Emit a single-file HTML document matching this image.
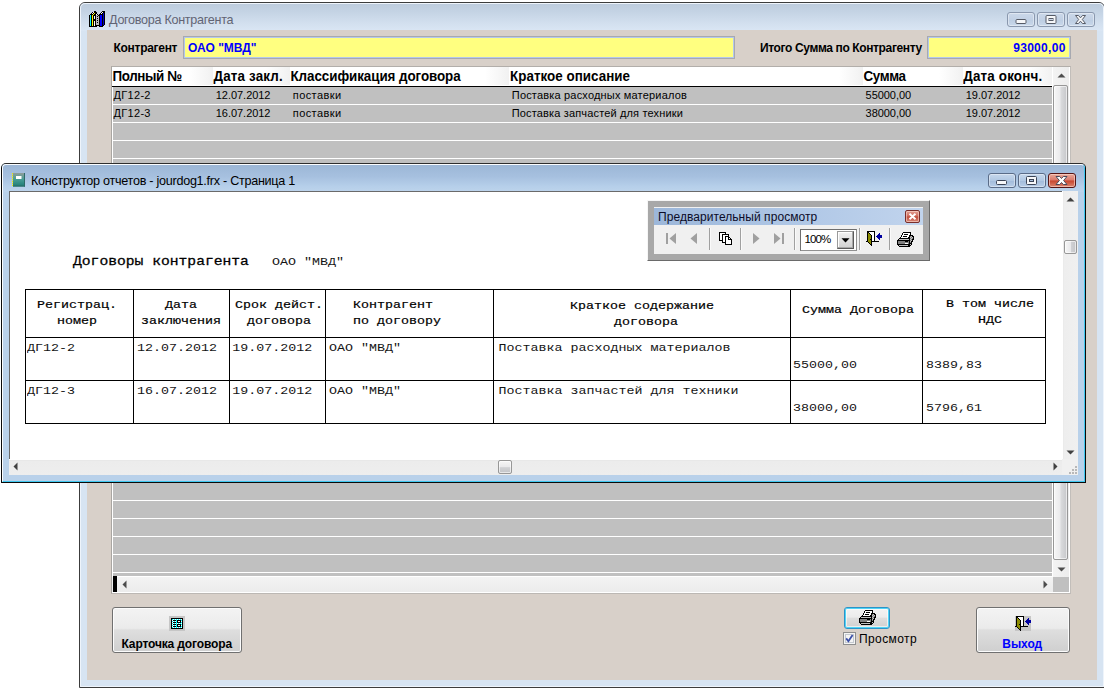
<!DOCTYPE html>
<html lang="ru">
<head>
<meta charset="utf-8">
<title>Договора Контрагента</title>
<style>
*{box-sizing:border-box;margin:0;padding:0}
html,body{width:1104px;height:689px;overflow:hidden;background:#fff}
body{position:relative;font-family:"Liberation Sans",sans-serif;font-size:11px;color:#000}
.a{position:absolute}
.t{position:absolute;white-space:nowrap;line-height:1}
.b{font-weight:bold}
.m{font-family:"Liberation Mono",monospace}

/* ---------- back window ---------- */
#w1{left:79px;top:2px;width:1026px;height:686px;border:1px solid #3c3c3c;border-radius:6px 6px 0 0;
  background:#d7e4f2;overflow:hidden}
#w1 .cap{left:0;top:0;width:100%;height:28px;background:linear-gradient(#bccbdc,#c4d3e4 30%,#d3e0ef 75%,#dae6f4)}
#w1 .hl{left:0;top:0;right:0;bottom:0;border:1px solid #eef4fb;border-radius:5px 5px 0 0}
#c1{left:87px;top:30px;width:1010px;height:650px;background:#d8d0c9}
.cb{position:absolute;top:12px;height:15px;border:1px solid #8a98ae;border-radius:3px;
  background:linear-gradient(#cbd8e9,#c2d1e5 50%,#bccde2 52%,#c9d8ea);box-shadow:inset 0 0 0 1px rgba(255,255,255,.4)}
.yb{position:absolute;background:#ffff80;border:1px solid #a7a9b0;box-shadow:inset 0 0 0 1px #b4c8ec}
.blue{color:#0000ff}

/* grid */
#g{left:111px;top:66px;width:960px;height:528px;background:#c0c0c0;border:1px solid;border-color:#b2aeaa #c2beba #bcb8b4 #a9a6a2;box-shadow:inset -1px -1px 0 #fff}
#gh{left:112px;top:67px;width:941px;height:19px;background:#fff}
.gs{position:absolute;top:67px;height:18px;width:24px;background:linear-gradient(90deg,rgba(242,242,242,0),#f1f1f1)}
.gr{position:absolute;left:113px;width:939px;height:1px;background:#fff}
.h{position:absolute;top:69px;font-weight:bold;font-size:13.4px;white-space:nowrap;line-height:15px;margin-left:-.5px;transform:scaleY(1.07);transform-origin:0 12px}
.d{position:absolute;font-size:11px;white-space:nowrap;line-height:13px}
.btn{position:absolute;border:1px solid #707070;border-radius:3px;
  background:linear-gradient(#f3f3f3,#ebebeb 46%,#dedede 50%,#cfcfcf);box-shadow:inset 0 0 0 1px #fcfcfc}

/* ---------- front window ---------- */
#w2{left:1px;top:163px;width:1085px;height:320px;border:1px solid #0a0a0a;border-top-color:#2e2e2e;border-radius:5px 5px 0 0;
  background:#b9d1ea;overflow:hidden}
#w2 .cap{left:0;top:0;width:100%;height:28px;background:linear-gradient(#9bb6d6,#a6c0df 45%,#b6cfea 80%,#bdd4ec)}
#w2 .hl{left:0;top:0;right:0;bottom:0;border:1px solid;border-color:#fbfdff #40c8f0 #40c8f0 #fbfdff;border-radius:4px 4px 0 0}
#c2{left:9px;top:191px;width:1069px;height:284px;background:#fff;border-top:1px solid #6a6a6a;border-left:1px solid #6a6a6a}
.vl{position:absolute;width:1px;background:#000}
.hln{position:absolute;height:1px;background:#000}
.rh,.rd,.rt{position:absolute;font-family:"Liberation Mono",monospace;font-size:13.33px;line-height:16px;height:16px;white-space:nowrap;transform:scaleY(.88);transform-origin:0 12px}
.rh{-webkit-text-stroke:.22px #000}
.rd{color:#141414}
.rt{font-size:14.67px;-webkit-text-stroke:.3px #000;transform:scaleY(.85);transform-origin:0 12px}
.sep{position:absolute;top:228px;width:2px;height:22px;border-left:1px solid #a0a0a0;border-right:1px solid #fafafa}
</style>
</head>
<body>

<!-- ================= BACK WINDOW ================= -->
<div id="w1" class="a"><div class="a cap"></div><div class="a hl"></div></div>
<div id="c1" class="a"></div>

<svg class="a" style="left:89px;top:11px" width="16" height="16" viewBox="0 0 16 16" shape-rendering="crispEdges"><path fill="#000000" d="M5 0h2v1h-2zM13 0h3v1h-3zM3 1h1v1h-1zM5 1h3v1h-3zM12 1h1v1h-1zM14 1h2v1h-2zM2 2h1v1h-1zM4 2h1v1h-1zM6 2h2v1h-2zM11 2h1v1h-1zM13 2h1v1h-1zM15 2h1v1h-1zM1 3h3v1h-3zM5 3h2v1h-2zM8 3h1v1h-1zM10 3h4v1h-4zM15 3h1v1h-1zM0 4h1v1h-1zM2 4h1v1h-1zM4 4h3v1h-3zM9 4h2v1h-2zM13 4h1v1h-1zM15 4h1v1h-1zM0 5h1v1h-1zM2 5h1v1h-1zM4 5h1v1h-1zM6 5h1v1h-1zM8 5h1v1h-1zM10 5h1v1h-1zM13 5h1v1h-1zM15 5h1v1h-1zM0 6h1v1h-1zM2 6h1v1h-1zM4 6h1v1h-1zM6 6h1v1h-1zM10 6h1v1h-1zM13 6h1v1h-1zM15 6h1v1h-1zM0 7h1v1h-1zM2 7h1v1h-1zM4 7h1v1h-1zM6 7h1v1h-1zM8 7h1v1h-1zM10 7h1v1h-1zM13 7h1v1h-1zM15 7h1v1h-1zM0 8h1v1h-1zM2 8h1v1h-1zM4 8h3v1h-3zM10 8h1v1h-1zM13 8h1v1h-1zM15 8h1v1h-1zM0 9h1v1h-1zM2 9h1v1h-1zM4 9h3v1h-3zM8 9h1v1h-1zM10 9h1v1h-1zM13 9h1v1h-1zM15 9h1v1h-1zM0 10h1v1h-1zM2 10h1v1h-1zM4 10h1v1h-1zM6 10h1v1h-1zM10 10h1v1h-1zM13 10h1v1h-1zM15 10h1v1h-1zM0 11h1v1h-1zM2 11h1v1h-1zM4 11h1v1h-1zM6 11h1v1h-1zM8 11h1v1h-1zM10 11h1v1h-1zM13 11h1v1h-1zM15 11h1v1h-1zM0 12h1v1h-1zM2 12h1v1h-1zM4 12h1v1h-1zM6 12h1v1h-1zM10 12h1v1h-1zM13 12h1v1h-1zM15 12h1v1h-1zM0 13h1v1h-1zM2 13h1v1h-1zM4 13h1v1h-1zM6 13h1v1h-1zM10 13h1v1h-1zM13 13h1v1h-1zM15 13h1v1h-1zM0 14h1v1h-1zM2 14h1v1h-1zM4 14h1v1h-1zM6 14h5v1h-5zM13 14h2v1h-2zM0 15h8v1h-8zM10 15h4v1h-4z"/><path fill="#ffffff" d="M4 1h1v1h-1zM13 1h1v1h-1zM3 2h1v1h-1zM12 2h1v1h-1zM7 3h1v1h-1zM5 5h1v1h-1zM5 6h1v1h-1zM5 7h1v1h-1zM5 10h1v1h-1zM5 11h1v1h-1zM5 12h1v1h-1zM5 13h1v1h-1zM5 14h1v1h-1z"/><path fill="#ffff00" d="M5 2h1v1h-1zM4 3h1v1h-1zM3 4h1v1h-1zM3 5h1v1h-1zM3 6h1v1h-1zM3 7h1v1h-1zM3 8h1v1h-1zM3 9h1v1h-1zM3 10h1v1h-1zM3 11h1v1h-1zM3 12h1v1h-1zM3 13h1v1h-1zM3 14h1v1h-1z"/><path fill="#0000c0" d="M14 2h1v1h-1zM14 3h1v1h-1zM14 4h1v1h-1zM14 5h1v1h-1zM14 6h1v1h-1zM14 7h1v1h-1zM14 8h1v1h-1zM14 9h1v1h-1zM14 10h1v1h-1zM14 11h1v1h-1zM14 12h1v1h-1zM14 13h1v1h-1z"/><path fill="#00ffff" d="M1 4h1v1h-1zM1 5h1v1h-1zM1 6h1v1h-1zM1 7h1v1h-1zM1 8h1v1h-1zM1 9h1v1h-1zM1 10h1v1h-1zM1 11h1v1h-1zM1 12h1v1h-1zM1 13h1v1h-1zM1 14h1v1h-1z"/><path fill="#c0c0c0" d="M7 4h2v1h-2zM7 5h1v1h-1zM9 5h1v1h-1zM7 6h3v1h-3zM7 7h1v1h-1zM9 7h1v1h-1zM7 8h3v1h-3zM7 9h1v1h-1zM9 9h1v1h-1zM7 10h3v1h-3zM7 11h1v1h-1zM9 11h1v1h-1zM7 12h3v1h-3zM7 13h3v1h-3z"/><path fill="#0000ff" d="M11 4h2v1h-2zM11 5h2v1h-2zM11 6h2v1h-2zM11 7h2v1h-2zM11 8h2v1h-2zM11 9h2v1h-2zM11 10h2v1h-2zM11 11h2v1h-2zM11 12h2v1h-2zM11 13h2v1h-2zM11 14h2v1h-2z"/></svg>
<div class="t" style="letter-spacing:-0.292px;left:109px;top:13.5px;font-size:12.6px;color:#626474">Договора Контрагента</div>

<!-- caption buttons (inactive) -->
<div class="cb" style="left:1007px;width:28px"></div>
<div class="cb" style="left:1037px;width:28px"></div>
<div class="cb" style="left:1067px;width:28px"></div>
<svg class="a" style="left:1007px;top:12px" width="88" height="15" viewBox="0 0 88 15">
  <rect x="9" y="7.500" width="10" height="4" fill="#f6f7f9" stroke="#565b66" stroke-width="1" rx="1"/>
  <rect x="39" y="3.500" width="10" height="8" fill="#f6f7f9" stroke="#565b66" stroke-width="1" rx="1"/>
  <rect x="42" y="6.5" width="4" height="2" fill="#c8d5e6" stroke="#565b66" stroke-width="1"/>
  <path d="M68.500 3.5 L71.5 3.500 L73.5 5.8 L75.5 3.5 L78.5 3.5 L75.3 7.5 L78.500 11.5 L75.5 11.5 L73.500 9.2 L71.5 11.500 L68.5 11.5 L71.7 7.500 Z" fill="#f6f7f9" stroke="#565b66" stroke-width="1" stroke-linejoin="round"/>
</svg>

<!-- top row -->
<div class="t b" style="letter-spacing:-0.288px;left:113.500px;top:42px;font-size:12px">Контрагент</div>
<div class="yb" style="left:183px;top:36px;width:552px;height:23px"></div>
<div class="t b blue" style="letter-spacing:-0.020px;left:188px;top:42px;font-size:12px">ОАО "МВД"</div>
<div class="t b" style="letter-spacing:-0.370px;left:760px;top:42px;font-size:12px">Итого Сумма по Контрагенту</div>
<div class="yb" style="left:927px;top:36px;width:144px;height:23px"></div>
<div class="t b blue" style="letter-spacing:0.305px;left:1013.2px;top:42px;font-size:12px">93000,00</div>

<!-- grid -->
<div id="g" class="a"></div>
<div id="gh" class="a"></div>
<div class="gs" style="left:189px"></div>
<div class="gs" style="left:266px"></div>
<div class="gs" style="left:485px"></div>
<div class="gs" style="left:839px"></div>
<div class="gs" style="left:939px"></div>
<div class="gs" style="left:1029px"></div>
<div class="a" style="left:112px;top:86px;width:941px;height:1px;background:#000"></div>
<div class="h" style="letter-spacing:-0.384px;left:113px">Полный №</div>
<div class="h" style="letter-spacing:0.163px;left:214px">Дата закл.</div>
<div class="h" style="letter-spacing:-0.061px;left:291px">Классификация договора</div>
<div class="h" style="letter-spacing:0.029px;left:510.5px">Краткое описание</div>
<div class="h" style="letter-spacing:-0.383px;left:864px">Сумма</div>
<div class="h" style="letter-spacing:0.181px;left:963.7px">Дата оконч.</div>

<div class="d" style="letter-spacing:0.312px;left:113.500px;top:89px">ДГ12-2</div>
<div class="d" style="letter-spacing:-0.040px;left:215.800px;top:89px">12.07.2012</div>
<div class="d" style="letter-spacing:0.411px;left:292.8px;top:89px">поставки</div>
<div class="d" style="letter-spacing:0.181px;left:511.8px;top:89px">Поставка расходных материалов</div>
<div class="d" style="letter-spacing:-0.056px;left:865.6px;top:89px">55000,00</div>
<div class="d" style="letter-spacing:-0.040px;left:965.800px;top:89px">19.07.2012</div>

<div class="d" style="letter-spacing:0.312px;left:113.5px;top:107px">ДГ12-3</div>
<div class="d" style="letter-spacing:-0.040px;left:215.8px;top:107px">16.07.2012</div>
<div class="d" style="letter-spacing:0.411px;left:292.800px;top:107px">поставки</div>
<div class="d" style="letter-spacing:0.150px;left:511.800px;top:107px">Поставка запчастей для техники</div>
<div class="d" style="letter-spacing:-0.056px;left:865.600px;top:107px">38000,00</div>
<div class="d" style="letter-spacing:-0.040px;left:965.8px;top:107px">19.07.2012</div>

<div class="gr" style="top:104px"></div>
<div class="gr" style="top:122px"></div>
<div class="gr" style="top:140px"></div>
<div class="gr" style="top:158px"></div>
<div class="gr" style="top:482px"></div>
<div class="gr" style="top:500px"></div>
<div class="gr" style="top:518px"></div>
<div class="gr" style="top:536px"></div>
<div class="gr" style="top:554px"></div>
<div class="gr" style="top:572px"></div>
<div class="a" style="left:112px;top:87px;width:1px;height:506px;background:#fff"></div>
<div class="a" style="left:112px;top:592px;width:958px;height:1px;background:#fff"></div>

<!-- grid v-scrollbar -->
<div class="a" style="left:1052px;top:67px;width:17px;height:510px;background:linear-gradient(90deg,#fff 1px,#f3f3f3 1px,#ededed)"></div>
<div class="a" style="left:1053px;top:85px;width:15px;height:475px;border:1px solid #979797;border-radius:2px;background:linear-gradient(90deg,#f6f6f6,#ebebed 45%,#d9dadc 55%,#c6c7ca);box-shadow:inset 0 0 0 1px rgba(255,255,255,.6)"></div>
<svg class="a" style="left:1057px;top:73.3px" width="9" height="5" viewBox="0 0 9 5"><path d="M0.5 4.500 L4.5 0.500 L8.5 4.5 Z" fill="#4d4d4d"/></svg>
<svg class="a" style="left:1057px;top:566.7px" width="9" height="5" viewBox="0 0 9 5"><path d="M0.500 0.5 L4.500 4.5 L8.500 0.5 Z" fill="#4d4d4d"/></svg>
<!-- grid h-scrollbar -->
<div class="a" style="left:112px;top:576px;width:941px;height:16px;background:linear-gradient(#fff 1px,#f3f3f3 1px,#ececec)"></div>
<div class="a" style="left:113px;top:576px;width:4px;height:16px;background:#000"></div>
<div class="a" style="left:1053px;top:577px;width:16px;height:15px;background:#c0c0c0"></div>
<svg class="a" style="left:122px;top:580px" width="5" height="9" viewBox="0 0 5 9"><path d="M4.5 0.5 L0.5 4.5 L4.5 8.500 Z" fill="#4d4d4d"/></svg>
<svg class="a" style="left:1042.7px;top:580px" width="5" height="9" viewBox="0 0 5 9"><path d="M0.5 0.500 L4.500 4.500 L0.5 8.5 Z" fill="#4d4d4d"/></svg>

<!-- bottom buttons -->
<div class="btn" style="left:112px;top:607px;width:130px;height:46px"></div>
<div class="a" style="left:169px;top:616px;width:16px;height:15px;background:#c6c6c6"></div>
<svg class="a" style="left:171px;top:618px" width="12" height="11" viewBox="0 0 12 11" shape-rendering="crispEdges"><path fill="#000000" d="M0 0h12v1h-12zM0 1h1v1h-1zM11 1h1v1h-1zM0 2h1v1h-1zM2 2h3v1h-3zM6 2h4v1h-4zM11 2h1v1h-1zM0 3h1v1h-1zM6 3h1v1h-1zM9 3h1v1h-1zM11 3h1v1h-1zM0 4h1v1h-1zM2 4h3v1h-3zM6 4h4v1h-4zM11 4h1v1h-1zM0 5h1v1h-1zM11 5h1v1h-1zM0 6h1v1h-1zM2 6h3v1h-3zM6 6h4v1h-4zM11 6h1v1h-1zM0 7h1v1h-1zM6 7h1v1h-1zM9 7h1v1h-1zM11 7h1v1h-1zM0 8h1v1h-1zM2 8h3v1h-3zM6 8h4v1h-4zM11 8h1v1h-1zM0 9h1v1h-1zM11 9h1v1h-1zM0 10h12v1h-12z"/><path fill="#00ffff" d="M1 1h1v1h-1zM3 1h1v1h-1zM5 1h1v1h-1zM7 1h1v1h-1zM9 1h1v1h-1zM5 2h1v1h-1zM10 2h1v1h-1zM1 3h1v1h-1zM3 3h1v1h-1zM5 3h1v1h-1zM5 4h1v1h-1zM10 4h1v1h-1zM1 5h1v1h-1zM3 5h1v1h-1zM5 5h1v1h-1zM7 5h1v1h-1zM9 5h1v1h-1zM5 6h1v1h-1zM10 6h1v1h-1zM1 7h1v1h-1zM3 7h1v1h-1zM5 7h1v1h-1zM5 8h1v1h-1zM10 8h1v1h-1zM1 9h1v1h-1zM3 9h1v1h-1zM5 9h1v1h-1zM7 9h1v1h-1zM9 9h1v1h-1z"/><path fill="#ffffff" d="M2 1h1v1h-1zM4 1h1v1h-1zM6 1h1v1h-1zM8 1h1v1h-1zM10 1h1v1h-1zM1 2h1v1h-1zM2 3h1v1h-1zM4 3h1v1h-1zM7 3h2v1h-2zM10 3h1v1h-1zM1 4h1v1h-1zM2 5h1v1h-1zM4 5h1v1h-1zM6 5h1v1h-1zM8 5h1v1h-1zM10 5h1v1h-1zM1 6h1v1h-1zM2 7h1v1h-1zM4 7h1v1h-1zM7 7h2v1h-2zM10 7h1v1h-1zM1 8h1v1h-1zM2 9h1v1h-1zM4 9h1v1h-1zM6 9h1v1h-1zM8 9h1v1h-1zM10 9h1v1h-1z"/></svg>
<div class="t b" style="letter-spacing:-0.132px;left:121.5px;top:638px;font-size:12px">Карточка договора</div>

<div class="btn" style="left:844px;top:607px;width:46px;height:22px;border-color:#2c93c8;box-shadow:inset 0 0 0 1px #4fd4f6,inset 0 0 0 2px rgba(255,255,255,.6);background:linear-gradient(#f3f3f3,#ececec 46%,#dedede 50%,#d0d0d0)"></div>
<svg class="a" style="left:859px;top:610px" width="17" height="15" viewBox="0 0 17 15" shape-rendering="crispEdges"><path fill="#000000" d="M6 0h8v1h-8zM5 1h1v1h-1zM13 1h1v1h-1zM5 2h1v1h-1zM7 2h4v1h-4zM13 2h1v1h-1zM4 3h1v1h-1zM12 3h4v1h-4zM4 4h1v1h-1zM6 4h4v1h-4zM12 4h1v1h-1zM15 4h2v1h-2zM3 5h1v1h-1zM11 5h2v1h-2zM16 5h1v1h-1zM2 6h11v1h-11zM16 6h1v1h-1zM1 7h1v1h-1zM12 7h1v1h-1zM15 7h2v1h-2zM0 8h13v1h-13zM15 8h1v1h-1zM0 9h1v1h-1zM8 9h3v1h-3zM12 9h1v1h-1zM14 9h2v1h-2zM0 10h1v1h-1zM12 10h1v1h-1zM14 10h1v1h-1zM0 11h1v1h-1zM12 11h3v1h-3zM0 12h13v1h-13zM14 12h1v1h-1zM1 13h1v1h-1zM11 13h3v1h-3zM2 14h11v1h-11z"/><path fill="#ffffff" d="M6 1h7v1h-7zM6 2h1v1h-1zM11 2h2v1h-2zM5 3h7v1h-7zM5 4h1v1h-1zM10 4h2v1h-2zM4 5h7v1h-7zM8 11h3v1h-3z"/><path fill="#808080" d="M13 4h1v1h-1zM14 5h1v1h-1zM13 6h1v1h-1zM15 6h1v1h-1zM14 7h1v1h-1zM13 8h1v1h-1zM1 9h7v1h-7zM11 9h1v1h-1zM1 10h11v1h-11zM13 10h1v1h-1zM1 11h7v1h-7zM11 11h1v1h-1z"/><path fill="#c0c0c0" d="M14 4h1v1h-1zM13 5h1v1h-1zM15 5h1v1h-1zM14 6h1v1h-1zM2 7h10v1h-10zM13 7h1v1h-1zM14 8h1v1h-1zM13 9h1v1h-1zM13 12h1v1h-1zM2 13h9v1h-9z"/></svg>
<div class="a" style="left:843px;top:632px;width:13px;height:13px;border:1px solid #8e8f8f;background:#f4f4f4;box-shadow:inset 0 0 0 1px #f4f4f4,inset 0 0 0 2px #c4c9d0"></div>
<svg class="a" style="left:845px;top:634px" width="9" height="9" viewBox="0 0 9 9"><path d="M1.2 4.4 L3.4 7.2 L7.6 1" stroke="#3c50a8" stroke-width="1.8" fill="none"/></svg>
<div class="t" style="letter-spacing:0.398px;left:859px;top:633px;font-size:12px">Просмотр</div>

<div class="btn" style="left:976px;top:607px;width:94px;height:46px"></div>
<div class="a" style="left:1015px;top:616px;width:16px;height:15px;background:#c6c6c6"></div>
<svg class="a" style="left:1015px;top:616px" width="16" height="15" viewBox="0 0 16 15" shape-rendering="crispEdges"><path fill="#000000" d="M1 0h8v1h-8zM1 1h2v1h-2zM8 1h1v1h-1zM1 2h1v1h-1zM3 2h1v1h-1zM8 2h1v1h-1zM1 3h1v1h-1zM4 3h1v1h-1zM8 3h1v1h-1zM1 4h1v1h-1zM5 4h1v1h-1zM8 4h1v1h-1zM1 5h1v1h-1zM5 5h1v1h-1zM8 5h1v1h-1zM1 6h1v1h-1zM5 6h1v1h-1zM8 6h1v1h-1zM1 7h1v1h-1zM5 7h1v1h-1zM8 7h1v1h-1zM1 8h1v1h-1zM4 8h2v1h-2zM8 8h1v1h-1zM1 9h1v1h-1zM5 9h1v1h-1zM8 9h1v1h-1zM0 10h2v1h-2zM5 10h8v1h-8zM2 11h1v1h-1zM5 11h1v1h-1zM3 12h1v1h-1zM5 12h1v1h-1zM4 13h2v1h-2zM5 14h1v1h-1z"/><path fill="#ffffff" d="M3 1h5v1h-5zM4 2h4v1h-4zM5 3h3v1h-3zM6 4h2v1h-2zM6 5h2v1h-2zM6 6h2v1h-2zM6 7h2v1h-2zM6 8h2v1h-2zM6 9h2v1h-2z"/><path fill="#8c8c00" d="M2 2h1v1h-1zM2 3h2v1h-2zM2 4h3v1h-3zM2 5h3v1h-3zM2 6h3v1h-3zM2 7h3v1h-3zM2 8h2v1h-2zM2 9h3v1h-3zM2 10h3v1h-3zM3 11h2v1h-2zM4 12h1v1h-1z"/><path fill="#0000a0" d="M13 2h1v1h-1zM12 3h2v1h-2zM11 4h5v1h-5zM10 5h6v1h-6zM11 6h5v1h-5zM12 7h2v1h-2zM13 8h1v1h-1z"/></svg>
<div class="t b blue" style="letter-spacing:-0.070px;left:1002.3px;top:638px;font-size:12px">Выход</div>

<!-- ================= FRONT WINDOW ================= -->
<div id="w2" class="a"><div class="a cap"></div><div class="a hl"></div></div>
<div id="c2" class="a"></div>

<svg class="a" style="left:12px;top:173px" width="13" height="14" viewBox="0 0 13 14">
  <defs><linearGradient id="tg" x1="0" y1="0" x2="0" y2="1"><stop offset="0" stop-color="#8f9c9a"/><stop offset="0.45" stop-color="#4a9e96"/><stop offset="1" stop-color="#1c7c75"/></linearGradient></defs>
  <rect x="1" y="0" width="12" height="13.5" fill="url(#tg)"/>
  <path d="M12.500 0 V13.500 M1 13 H13" stroke="#2d6a66" stroke-width="1" fill="none"/>
  <rect x="4" y="3" width="5.5" height="3" fill="#fff"/>
  <path d="M0.5 0 V13" stroke="#f0e800" stroke-width="1" stroke-dasharray="1.3 0.7"/>
</svg>
<div class="t" style="letter-spacing:-0.271px;left:31px;top:174.500px;font-size:12.6px;color:#000">Конструктор отчетов - jourdog1.frx - Страница 1</div>

<!-- caption buttons (active) -->
<div class="cb" style="left:988px;top:173px;width:28px;border-color:#5a6c88;background:linear-gradient(#c6d7ec,#b1c8e3 50%,#a2bbda 52%,#b8cee8)"></div>
<div class="cb" style="left:1018px;top:173px;width:28px;border-color:#5a6c88;background:linear-gradient(#c6d7ec,#b1c8e3 50%,#a2bbda 52%,#b8cee8)"></div>
<div class="cb" style="left:1048px;top:173px;width:28px;border-color:#551515;background:linear-gradient(#e9a99b,#d9786a 48%,#c8452d 52%,#d98570);box-shadow:inset 0 0 0 1px rgba(255,220,210,.6)"></div>
<svg class="a" style="left:988px;top:173px" width="88" height="15" viewBox="0 0 88 15">
  <rect x="8.500" y="7.5" width="10" height="4" fill="#f6f7f9" stroke="#3b4456" stroke-width="1" rx="1"/>
  <rect x="38.5" y="3.5" width="10" height="8" fill="#f6f7f9" stroke="#3b4456" stroke-width="1" rx="1"/>
  <rect x="41.5" y="6.500" width="4" height="2" fill="#a6bedc" stroke="#3b4456" stroke-width="1"/>
  <path d="M68 3.5 L71.7 3.5 L73.5 5.5 L75.3 3.5 L79 3.5 L75.6 7.5 L79 11.5 L75.3 11.5 L73.5 9.5 L71.7 11.5 L68 11.5 L71.4 7.5 Z" fill="#fff" stroke="#4a4a5a" stroke-width="1" stroke-linejoin="round"/>
</svg>

<!-- report -->
<div class="rt" style="left:73px;top:253.3px">Договоры контрагента</div>
<div class="rd" style="left:272px;top:254.0px">ОАО "МВД"</div>
<div class="hln" style="left:25px;top:289px;width:1021px"></div>
<div class="hln" style="left:25px;top:337px;width:1021px"></div>
<div class="hln" style="left:25px;top:380px;width:1021px"></div>
<div class="hln" style="left:25px;top:423px;width:1021px"></div>
<div class="vl" style="left:25px;top:289px;height:135px"></div>
<div class="vl" style="left:133px;top:289px;height:135px"></div>
<div class="vl" style="left:229px;top:289px;height:135px"></div>
<div class="vl" style="left:325px;top:289px;height:135px"></div>
<div class="vl" style="left:493px;top:289px;height:135px"></div>
<div class="vl" style="left:790px;top:289px;height:135px"></div>
<div class="vl" style="left:922px;top:289px;height:135px"></div>
<div class="vl" style="left:1045px;top:289px;height:135px"></div>
<div class="rh" style="left:37px;top:296.5px">Регистрац.</div>
<div class="rh" style="left:57px;top:312.5px">номер</div>
<div class="rh" style="left:165px;top:296.5px">Дата</div>
<div class="rh" style="left:141px;top:312.5px">заключения</div>
<div class="rh" style="left:235px;top:296.5px">Срок дейст.</div>
<div class="rh" style="left:247px;top:312.5px">договора</div>
<div class="rh" style="left:353px;top:296.5px">Контрагент</div>
<div class="rh" style="left:353px;top:312.5px">по договору</div>
<div class="rh" style="left:570px;top:297.5px">Краткое содержание</div>
<div class="rh" style="left:614px;top:313.5px">договора</div>
<div class="rh" style="left:802px;top:301.5px">Сумма Договора</div>
<div class="rh" style="left:946px;top:295.5px">В том числе</div>
<div class="rh" style="left:978px;top:311.5px">НДС</div>
<div class="rd" style="left:27px;top:339.5px">ДГ12-2</div>
<div class="rd" style="left:137px;top:339.5px">12.07.2012</div>
<div class="rd" style="left:232.3px;top:339.5px">19.07.2012</div>
<div class="rd" style="left:329px;top:339.5px">ОАО "МВД"</div>
<div class="rd" style="left:498.5px;top:339.5px">Поставка расходных материалов</div>
<div class="rd" style="left:793px;top:357.0px">55000,00</div>
<div class="rd" style="left:926px;top:357.0px">8389,83</div>
<div class="rd" style="left:27px;top:382.5px">ДГ12-3</div>
<div class="rd" style="left:137px;top:382.5px">16.07.2012</div>
<div class="rd" style="left:232.3px;top:382.5px">19.07.2012</div>
<div class="rd" style="left:329px;top:382.5px">ОАО "МВД"</div>
<div class="rd" style="left:498.5px;top:382.5px">Поставка запчастей для техники</div>
<div class="rd" style="left:793px;top:400.0px">38000,00</div>
<div class="rd" style="left:926px;top:400.0px">5796,61</div>

<!-- preview toolbar -->
<div class="a" style="left:647px;top:200px;width:283px;height:61px;background:#a8a8a8;border:1px solid;border-color:#f6f6f6 #6a6a6a #6a6a6a #f6f6f6"></div>
<div class="a" style="left:654px;top:207px;width:269px;height:47px;background:#f0f0f0"></div>
<div class="a" style="left:654px;top:208px;width:269px;height:17px;background:linear-gradient(90deg,#9cb7da,#b2c9e7 60%,#c1d4ed)"></div>
<div class="t" style="letter-spacing:0.058px;left:658px;top:211px;font-size:12px;color:#0c0c28">Предварительный просмотр</div>
<div class="a" style="left:905px;top:210px;width:15px;height:13px;border:1px solid #7a2e2a;border-radius:2px;background:linear-gradient(#e2a093,#cf6b5c 48%,#c04a38 52%,#d98a7a);box-shadow:inset 0 0 0 1px rgba(255,225,215,.55)"></div>
<svg class="a" style="left:908px;top:213px" width="9" height="7" viewBox="0 0 9 7"><path d="M1.5 0.8 L7.5 6.2 M7.5 0.8 L1.5 6.2" stroke="#fff" stroke-width="1.9"/></svg>

<svg class="a" style="left:664px;top:231px" width="124" height="16" viewBox="0 0 124 16">
  <rect x="2" y="2" width="2" height="11" fill="#a0a0a0"/>
  <path d="M12 2 V13 L5.500 7.5 Z" fill="#a0a0a0"/>
  <path d="M33 2 V13 L26.500 7.5 Z" fill="#a0a0a0"/>
  <path d="M89 2 V13 L95.500 7.5 Z" fill="#a0a0a0"/>
  <path d="M110 2 V13 L116.500 7.5 Z" fill="#a0a0a0"/>
  <rect x="118" y="2" width="2" height="11" fill="#a0a0a0"/>
</svg>
<svg class="a" style="left:719px;top:232px" width="13" height="13" viewBox="0 0 13 13" shape-rendering="crispEdges"><path fill="#000000" d="M0 0h7v1h-7zM0 1h1v1h-1zM6 1h1v1h-1zM0 2h1v1h-1zM3 2h7v1h-7zM0 3h1v1h-1zM3 3h1v1h-1zM9 3h1v1h-1zM0 4h1v1h-1zM3 4h1v1h-1zM6 4h4v1h-4zM0 5h1v1h-1zM3 5h1v1h-1zM6 5h1v1h-1zM9 5h2v1h-2zM0 6h1v1h-1zM3 6h1v1h-1zM6 6h1v1h-1zM9 6h1v1h-1zM11 6h1v1h-1zM0 7h1v1h-1zM3 7h1v1h-1zM6 7h1v1h-1zM9 7h4v1h-4zM0 8h4v1h-4zM6 8h1v1h-1zM12 8h1v1h-1zM3 9h1v1h-1zM6 9h1v1h-1zM12 9h1v1h-1zM3 10h4v1h-4zM12 10h1v1h-1zM6 11h1v1h-1zM12 11h1v1h-1zM6 12h7v1h-7z"/><path fill="#ffffff" d="M1 1h5v1h-5zM1 2h2v1h-2zM1 3h2v1h-2zM4 3h5v1h-5zM1 4h2v1h-2zM4 4h2v1h-2zM1 5h2v1h-2zM4 5h2v1h-2zM7 5h2v1h-2zM1 6h2v1h-2zM4 6h2v1h-2zM7 6h2v1h-2zM10 6h1v1h-1zM1 7h2v1h-2zM4 7h2v1h-2zM7 7h2v1h-2zM4 8h2v1h-2zM7 8h5v1h-5zM4 9h2v1h-2zM7 9h5v1h-5zM7 10h5v1h-5zM7 11h5v1h-5z"/></svg>
<div class="sep" style="left:709px"></div>
<div class="sep" style="left:740px"></div>
<div class="sep" style="left:794px"></div>
<div class="sep" style="left:859px"></div>
<div class="sep" style="left:889px"></div>

<div class="a" style="left:800px;top:229px;width:57px;height:22px;background:#fff;border:1px solid;border-color:#6e6e6e #909090 #909090 #6e6e6e"></div>
<div class="t" style="letter-spacing:-0.874px;left:804.5px;top:234px;font-size:11.5px">100%</div>
<div class="a" style="left:837px;top:231px;width:17px;height:18px;border:1px solid;border-color:#9a9a9a #5a5a5a #5a5a5a #9a9a9a;background:linear-gradient(#f2f2f2,#d0d0d0);box-shadow:inset -1px -1px 0 #a8a8a8,inset 1px 1px 0 #fff"></div>
<svg class="a" style="left:841px;top:238px" width="9" height="5" viewBox="0 0 9 5"><path d="M0.5 0.3 H8.5 L4.5 4.6 Z" fill="#000"/></svg>

<svg class="a" style="left:866px;top:231px" width="16" height="15" viewBox="0 0 16 15" shape-rendering="crispEdges"><path fill="#000000" d="M1 0h8v1h-8zM1 1h2v1h-2zM8 1h1v1h-1zM1 2h1v1h-1zM3 2h1v1h-1zM8 2h1v1h-1zM1 3h1v1h-1zM4 3h1v1h-1zM8 3h1v1h-1zM1 4h1v1h-1zM5 4h1v1h-1zM8 4h1v1h-1zM1 5h1v1h-1zM5 5h1v1h-1zM8 5h1v1h-1zM1 6h1v1h-1zM5 6h1v1h-1zM8 6h1v1h-1zM1 7h1v1h-1zM5 7h1v1h-1zM8 7h1v1h-1zM1 8h1v1h-1zM4 8h2v1h-2zM8 8h1v1h-1zM1 9h1v1h-1zM5 9h1v1h-1zM8 9h1v1h-1zM0 10h2v1h-2zM5 10h8v1h-8zM2 11h1v1h-1zM5 11h1v1h-1zM3 12h1v1h-1zM5 12h1v1h-1zM4 13h2v1h-2zM5 14h1v1h-1z"/><path fill="#ffffff" d="M3 1h5v1h-5zM4 2h4v1h-4zM5 3h3v1h-3zM6 4h2v1h-2zM6 5h2v1h-2zM6 6h2v1h-2zM6 7h2v1h-2zM6 8h2v1h-2zM6 9h2v1h-2z"/><path fill="#8c8c00" d="M2 2h1v1h-1zM2 3h2v1h-2zM2 4h3v1h-3zM2 5h3v1h-3zM2 6h3v1h-3zM2 7h3v1h-3zM2 8h2v1h-2zM2 9h3v1h-3zM2 10h3v1h-3zM3 11h2v1h-2zM4 12h1v1h-1z"/><path fill="#0000a0" d="M13 2h1v1h-1zM12 3h2v1h-2zM11 4h5v1h-5zM10 5h6v1h-6zM11 6h5v1h-5zM12 7h2v1h-2zM13 8h1v1h-1z"/></svg>
<svg class="a" style="left:897px;top:232px" width="17" height="15" viewBox="0 0 17 15" shape-rendering="crispEdges"><path fill="#000000" d="M6 0h8v1h-8zM5 1h1v1h-1zM13 1h1v1h-1zM5 2h1v1h-1zM7 2h4v1h-4zM13 2h1v1h-1zM4 3h1v1h-1zM12 3h4v1h-4zM4 4h1v1h-1zM6 4h4v1h-4zM12 4h1v1h-1zM15 4h2v1h-2zM3 5h1v1h-1zM11 5h2v1h-2zM16 5h1v1h-1zM2 6h11v1h-11zM16 6h1v1h-1zM1 7h1v1h-1zM12 7h1v1h-1zM15 7h2v1h-2zM0 8h13v1h-13zM15 8h1v1h-1zM0 9h1v1h-1zM8 9h3v1h-3zM12 9h1v1h-1zM14 9h2v1h-2zM0 10h1v1h-1zM12 10h1v1h-1zM14 10h1v1h-1zM0 11h1v1h-1zM12 11h3v1h-3zM0 12h13v1h-13zM14 12h1v1h-1zM1 13h1v1h-1zM11 13h3v1h-3zM2 14h11v1h-11z"/><path fill="#ffffff" d="M6 1h7v1h-7zM6 2h1v1h-1zM11 2h2v1h-2zM5 3h7v1h-7zM5 4h1v1h-1zM10 4h2v1h-2zM4 5h7v1h-7zM8 11h3v1h-3z"/><path fill="#808080" d="M13 4h1v1h-1zM14 5h1v1h-1zM13 6h1v1h-1zM15 6h1v1h-1zM14 7h1v1h-1zM13 8h1v1h-1zM1 9h7v1h-7zM11 9h1v1h-1zM1 10h11v1h-11zM13 10h1v1h-1zM1 11h7v1h-7zM11 11h1v1h-1z"/><path fill="#c0c0c0" d="M14 4h1v1h-1zM13 5h1v1h-1zM15 5h1v1h-1zM14 6h1v1h-1zM2 7h10v1h-10zM13 7h1v1h-1zM14 8h1v1h-1zM13 9h1v1h-1zM13 12h1v1h-1zM2 13h9v1h-9z"/></svg>

<!-- front window scrollbars -->
<div class="a" style="left:1062px;top:191px;width:16px;height:268px;background:linear-gradient(90deg,#fff 1px,#e9e9e9 1px,#eeeeee 2.5px,#f0f0f0)"></div>
<div class="a" style="left:9px;top:459px;width:1053px;height:16px;background:linear-gradient(#fff 1px,#e6e6e6 1px,#ececec 2.5px,#eeeeee)"></div>
<div class="a" style="left:1062px;top:459px;width:16px;height:16px;background:#f0f0f0"></div>
<div class="a" style="left:1064px;top:240px;width:13px;height:14px;border:1px solid #979797;border-radius:2px;background:linear-gradient(90deg,#f6f6f6,#e9e9eb 50%,#d0d1d4 55%,#c4c5c8);box-shadow:inset 0 0 0 1px rgba(255,255,255,.6)"></div>
<div class="a" style="left:498px;top:460px;width:14px;height:14px;border:1px solid #979797;border-radius:2px;background:linear-gradient(#f6f6f6,#e9e9eb 50%,#d0d1d4 55%,#c4c5c8);box-shadow:inset 0 0 0 1px rgba(255,255,255,.6)"></div>
<svg class="a" style="left:1066px;top:197px" width="9" height="5" viewBox="0 0 9 5"><path d="M0.5 4.5 L4.5 0.5 L8.5 4.5 Z" fill="#404040"/></svg>
<svg class="a" style="left:1066px;top:450px" width="9" height="5" viewBox="0 0 9 5"><path d="M0.5 0.5 L4.5 4.5 L8.5 0.5 Z" fill="#404040"/></svg>
<svg class="a" style="left:13px;top:462px" width="5" height="9" viewBox="0 0 5 9"><path d="M4.5 0.5 L0.5 4.5 L4.5 8.5 Z" fill="#404040"/></svg>
<svg class="a" style="left:1052.7px;top:462px" width="5" height="9" viewBox="0 0 5 9"><path d="M0.5 0.5 L4.5 4.5 L0.5 8.5 Z" fill="#404040"/></svg>
<svg class="a" style="left:1067px;top:463.5px" width="11" height="11" viewBox="0 0 11 11"><path d="M8 2 h2 v2 h-2z M5 5 h2 v2 h-2z M8 5 h2 v2 h-2z M2 8 h2 v2 h-2z M5 8 h2 v2 h-2z M8 8 h2 v2 h-2z" fill="#b8b8b8"/></svg>

</body>
</html>
